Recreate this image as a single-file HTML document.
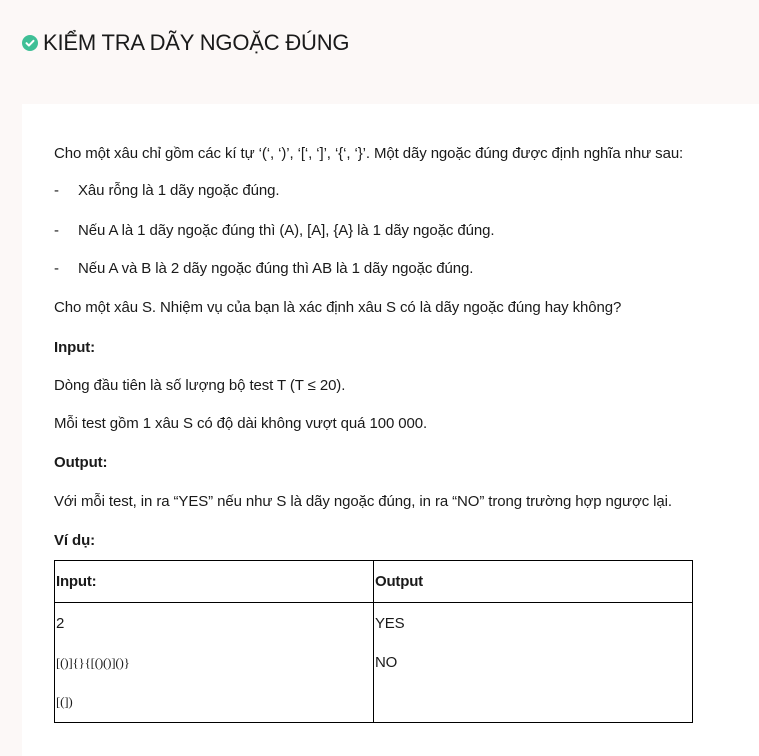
<!DOCTYPE html>
<html><head><meta charset="utf-8"><style>
html,body{margin:0;padding:0}
body{width:759px;height:756px;background:#fcf8f7;font-family:"Liberation Sans",sans-serif;color:#1a1a1a;position:relative;overflow:hidden}
h1{position:absolute;left:22px;top:30px;margin:0;font-weight:normal;font-size:22px;color:#1a1a1a;display:flex;align-items:center;letter-spacing:-0.2px}
h1 svg{margin-right:5px}
.panel{position:absolute;left:22px;top:104px;right:0;bottom:0;background:#fff}
.l{position:absolute;left:54px;font-size:15px;line-height:18px;white-space:nowrap;letter-spacing:-0.1px}
.b{font-weight:bold}
.d{display:inline-block;width:24px}
table{position:absolute;left:54px;top:560px;border-collapse:collapse;font-size:15px}
td{border:1px solid #000;vertical-align:top;padding:0 1px;letter-spacing:-0.2px}
.s{font-family:"Liberation Serif",serif;font-size:13px}
</style></head><body>
<h1><svg width="16" height="16" viewBox="0 0 16 16"><circle cx="8" cy="8" r="8" fill="#3fbf96"/><path d="M4.5 8.2l2.4 2.4 4.6-4.8" stroke="#fff" stroke-width="2" fill="none" stroke-linecap="round" stroke-linejoin="round"/></svg>KIỂM TRA DÃY NGOẶC ĐÚNG</h1>
<div class="panel"></div>
<div class="l" style="top:145px">Cho một xâu chỉ gồm các kí tự ‘(‘, ‘)’, ‘[‘, ‘]’, ‘{‘, ‘}’. Một dãy ngoặc đúng được định nghĩa như sau:</div>
<div class="l" style="top:182px"><span class="d">-</span>Xâu rỗng là 1 dãy ngoặc đúng.</div>
<div class="l" style="top:222px"><span class="d">-</span>Nếu A là 1 dãy ngoặc đúng thì (A), [A], {A} là 1 dãy ngoặc đúng.</div>
<div class="l" style="top:260px"><span class="d">-</span>Nếu A và B là 2 dãy ngoặc đúng thì AB là 1 dãy ngoặc đúng.</div>
<div class="l" style="top:299px">Cho một xâu S. Nhiệm vụ của bạn là xác định xâu S có là dãy ngoặc đúng hay không?</div>
<div class="l b" style="top:339px">Input:</div>
<div class="l" style="top:377px">Dòng đầu tiên là số lượng bộ test T (T ≤ 20).</div>
<div class="l" style="top:415px">Mỗi test gồm 1 xâu S có độ dài không vượt quá 100 000.</div>
<div class="l b" style="top:454px">Output:</div>
<div class="l" style="top:493px">Với mỗi test, in ra “YES” nếu như S là dãy ngoặc đúng, in ra “NO” trong trường hợp ngược lại.</div>
<div class="l b" style="top:532px">Ví dụ:</div>
<table>
<tr style="height:42px"><td style="width:316px;padding-top:12px;font-weight:bold">Input:</td><td style="width:316px;padding-top:12px;font-weight:bold">Output</td></tr>
<tr style="height:120px"><td style="padding-top:12px"><div style="line-height:18px">2</div><div class="s" style="margin-top:21px;line-height:18px">[()]{}{[()()]()}</div><div class="s" style="margin-top:21px;line-height:18px">[(])</div></td><td style="padding-top:12px"><div style="line-height:18px">YES</div><div style="margin-top:21px;line-height:18px">NO</div></td></tr>
</table>
</body></html>
